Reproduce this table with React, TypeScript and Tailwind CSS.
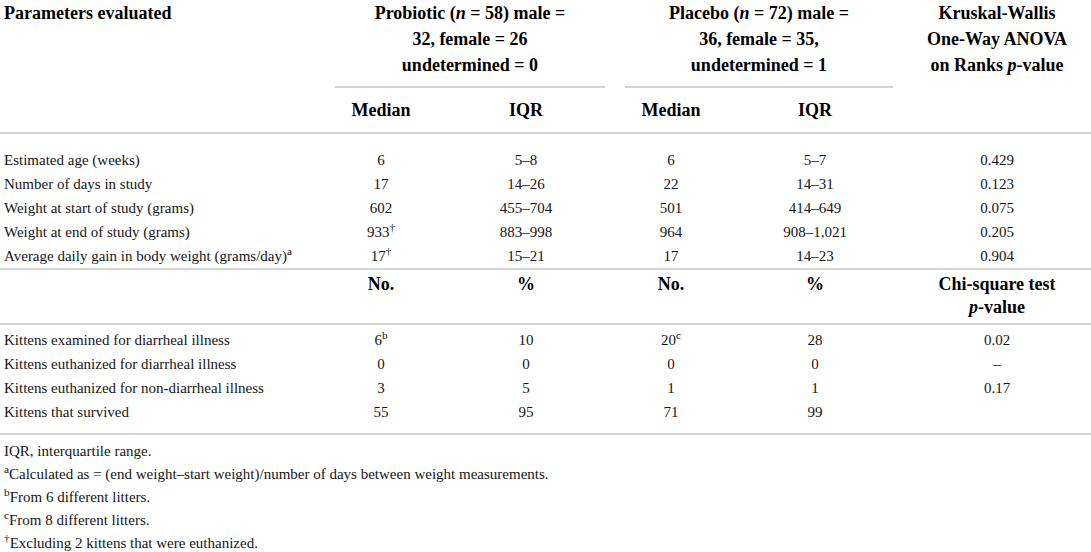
import type { ReactNode } from 'react';

type Row = {
  label: ReactNode;
  cells: ReactNode[];
};

const cols = 'grid grid-cols-[325px_112px_178px_112px_176px_188px]';

const continuousRows: Row[] = [
  { label: 'Estimated age (weeks)', cells: ['6', '5–8', '6', '5–7', '0.429'] },
  { label: 'Number of days in study', cells: ['17', '14–26', '22', '14–31', '0.123'] },
  { label: 'Weight at start of study (grams)', cells: ['602', '455–704', '501', '414–649', '0.075'] },
  {
    label: 'Weight at end of study (grams)',
    cells: [
      <>
        933<sup>†</sup>
      </>,
      '883–998',
      '964',
      '908–1,021',
      '0.205',
    ],
  },
  {
    label: (
      <>
        Average daily gain in body weight (grams/day)<sup>a</sup>
      </>
    ),
    cells: [
      <>
        17<sup>†</sup>
      </>,
      '15–21',
      '17',
      '14–23',
      '0.904',
    ],
  },
];

const countRows: Row[] = [
  {
    label: 'Kittens examined for diarrheal illness',
    cells: [
      <>
        6<sup>b</sup>
      </>,
      '10',
      <>
        20<sup>c</sup>
      </>,
      '28',
      '0.02',
    ],
  },
  { label: 'Kittens euthanized for diarrheal illness', cells: ['0', '0', '0', '0', '–'] },
  { label: 'Kittens euthanized for non-diarrheal illness', cells: ['3', '5', '1', '1', '0.17'] },
  { label: 'Kittens that survived', cells: ['55', '95', '71', '99', ''] },
];

function Rule() {
  return <div className="h-[2px] w-full bg-[#d3d3d3]" />;
}

function BodyRows({ rows }: { rows: Row[] }) {
  return (
    <div className={cols}>
      {rows.map((row, i) => (
        <div key={i} className="contents">
          <div className="h-[24px] pl-[4px] leading-[24px] whitespace-nowrap">{row.label}</div>
          {row.cells.map((cell, j) => (
            <div key={j} className="h-[24px] text-center leading-[24px]">
              {cell}
            </div>
          ))}
        </div>
      ))}
    </div>
  );
}

export default function App() {
  return (
    <div className="h-[552px] w-[1091px] overflow-hidden bg-white font-['Liberation_Serif',serif] text-[15px] text-[#161616]">
      {/* Top header */}
      <div className={`${cols} text-[18px] font-bold leading-[26px] text-black`}>
        <div className="row-span-2 pl-[4px]">Parameters evaluated</div>
        <div className="col-span-2 mx-[10px] border-b-2 border-[#d3d3d3] pb-[8px] text-center">
          Probiotic (<i>n</i> = 58) male =
          <br />
          32, female = 26
          <br />
          undetermined = 0
        </div>
        <div className="col-span-2 mx-[10px] border-b-2 border-[#d3d3d3] pb-[8px] text-center">
          Placebo (<i>n</i> = 72) male =
          <br />
          36, female = 35,
          <br />
          undetermined = 1
        </div>
        <div className="row-span-2 text-center">
          Kruskal-Wallis
          <br />
          One-Way ANOVA
          <br />
          on Ranks <i>p</i>-value
        </div>
        <div className="flex h-[44px] items-center justify-center">Median</div>
        <div className="flex h-[44px] items-center justify-center">IQR</div>
        <div className="flex h-[44px] items-center justify-center">Median</div>
        <div className="flex h-[44px] items-center justify-center">IQR</div>
      </div>
      <Rule />

      <div className="pt-[14px]">
        <BodyRows rows={continuousRows} />
      </div>
      <Rule />

      {/* Second header */}
      <div className={`${cols} pt-[3px] pb-[4px] text-[18px] font-bold leading-[23px] text-black`}>
        <div />
        <div className="text-center">No.</div>
        <div className="text-center">%</div>
        <div className="text-center">No.</div>
        <div className="text-center">%</div>
        <div className="text-center">
          Chi-square test
          <br />
          <i>p</i>-value
        </div>
      </div>
      <Rule />

      <div className="pt-[3px] pb-[9px]">
        <BodyRows rows={countRows} />
      </div>
      <Rule />

      {/* Footnotes */}
      <div className="pt-[5px] pl-[4px] text-[15px] leading-[23px]">
        <p>IQR, interquartile range.</p>
        <p>
          <sup>a</sup>Calculated as = (end weight–start weight)/number of days between weight measurements.
        </p>
        <p>
          <sup>b</sup>From 6 different litters.
        </p>
        <p>
          <sup>c</sup>From 8 different litters.
        </p>
        <p>
          <sup>†</sup>Excluding 2 kittens that were euthanized.
        </p>
      </div>
    </div>
  );
}
